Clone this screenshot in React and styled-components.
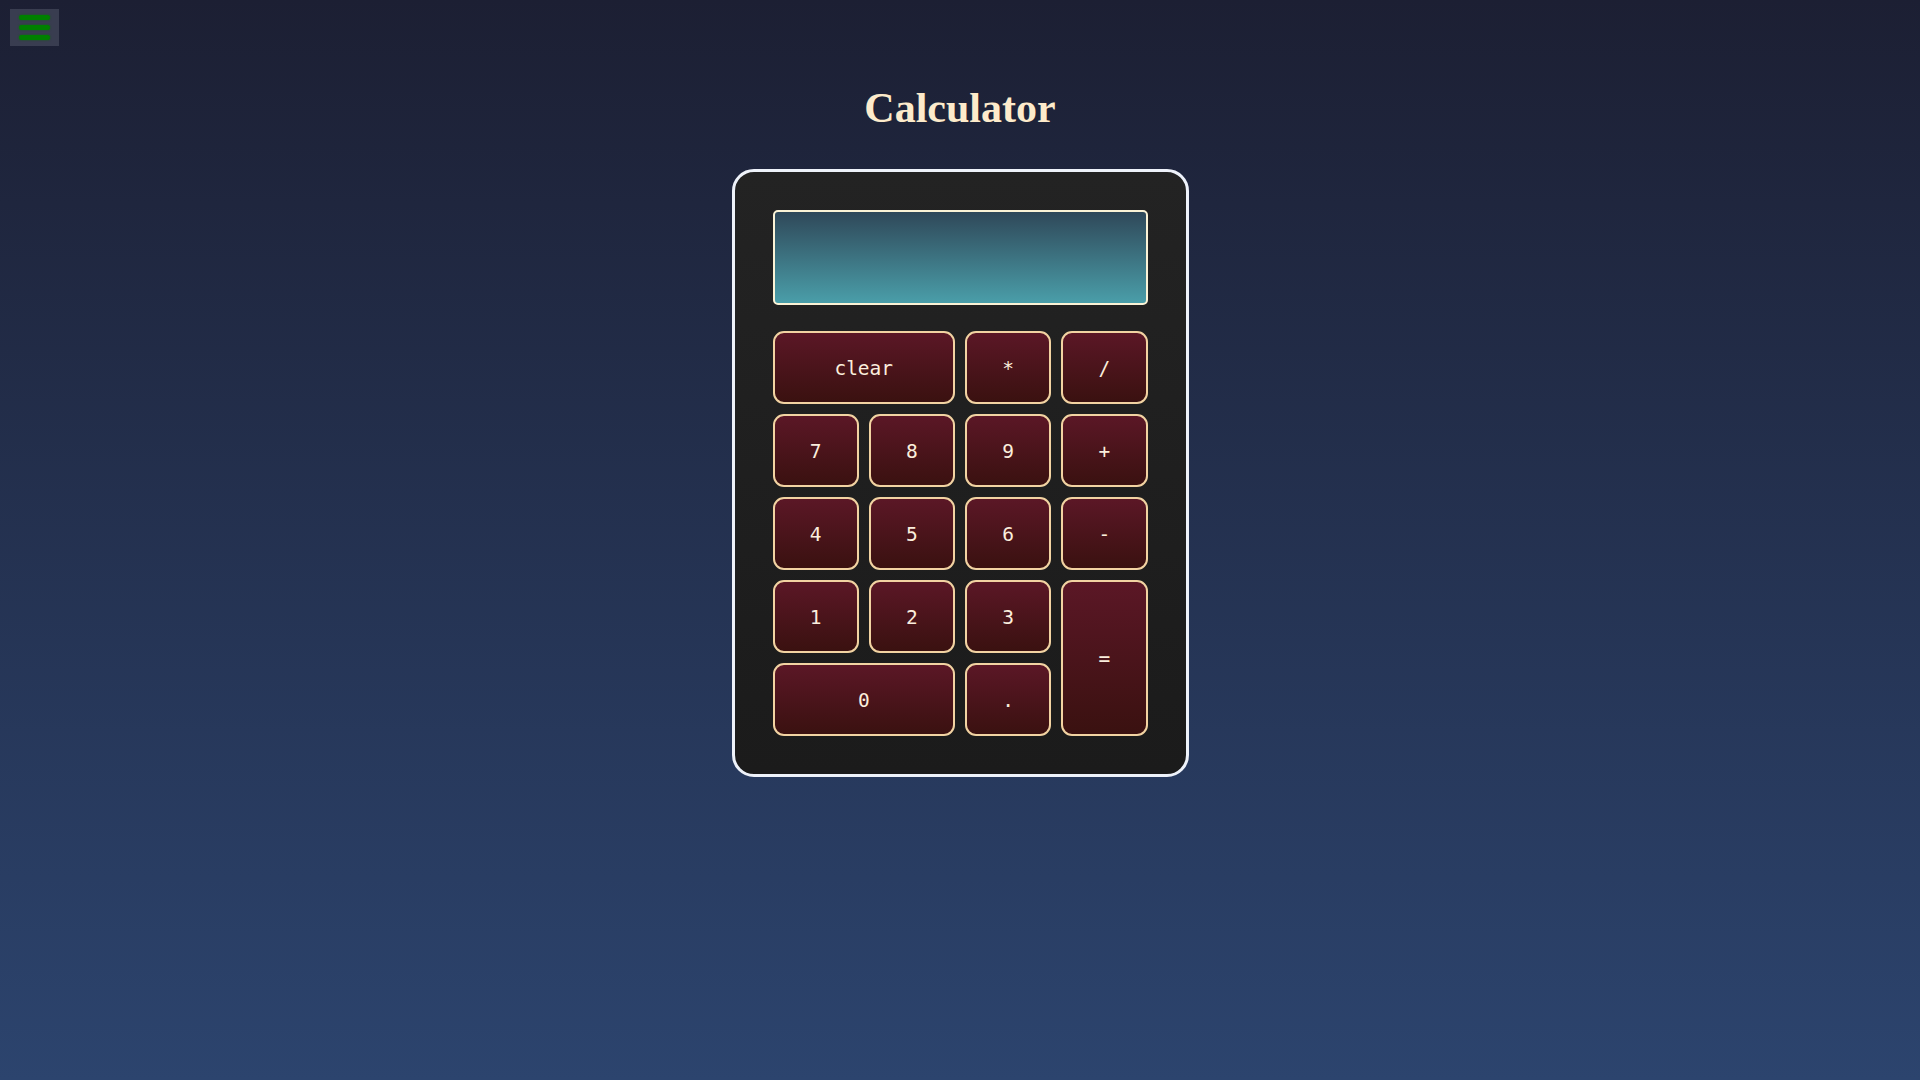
import React from "react";
import styled, { createGlobalStyle } from "styled-components";

const Global = createGlobalStyle`
  html, body { margin: 0; padding: 0; }
  body {
    min-height: 100vh;
    background: linear-gradient(180deg, #1c1f33 0%, #2c446e 100%);
    font-family: "DejaVu Sans Mono", "Liberation Mono", monospace;
  }
  #root { min-height: 100vh; }
`;

const Page = styled.div`
  min-height: 100vh;
  display: flex;
  flex-direction: column;
  align-items: center;
`;

const TopBar = styled.div`
  align-self: stretch;
  padding: 9px 10px 0;
  display: flex;
`;

const MenuButton = styled.button`
  width: 49px;
  height: 37px;
  padding: 0;
  border: none;
  background: rgba(70, 74, 92, 0.7);
  display: flex;
  flex-direction: column;
  align-items: center;
  justify-content: center;
  gap: 5px;
  cursor: pointer;
`;

const MenuLine = styled.span`
  display: block;
  width: 31px;
  height: 5px;
  border-radius: 3px;
  background: #008000;
  box-shadow: 0 0 2px #0a6a0a;
`;

const Title = styled.h1`
  margin: 38px 0 0;
  font-family: "Liberation Serif", "DejaVu Serif", serif;
  font-weight: 700;
  font-size: 42px;
  line-height: normal;
  color: #fdebcb;
  letter-spacing: 0;
`;

const Calculator = styled.div`
  margin-top: 37px;
  width: 375px;
  padding: 38px;
  border: 3px solid #eef2fa;
  border-radius: 22px;
  background: linear-gradient(180deg, #232323 0%, #1b1b1b 100%);
`;

const Display = styled.div`
  box-sizing: border-box;
  height: 95px;
  border: 2px solid #fbf3d6;
  border-radius: 5px;
  background: linear-gradient(180deg, #2f4859 0%, #4a9ea9 100%);
  margin-bottom: 26px;
`;

const Keys = styled.div`
  display: grid;
  grid-template-columns: repeat(4, 1fr);
  grid-auto-rows: 72.5px;
  column-gap: 10px;
  row-gap: 10.5px;
`;

const Key = styled.button`
  box-sizing: border-box;
  grid-column: span ${(p) => p.$cols || 1};
  grid-row: span ${(p) => p.$rows || 1};
  border: 2px solid #f2d3a2;
  border-radius: 11px;
  background: linear-gradient(180deg, #5b1726 0%, #3a1110 100%);
  color: #fbeedd;
  font-family: "DejaVu Sans Mono", "Liberation Mono", monospace;
  font-size: 19.5px;
  padding: 2px 0 0;
  cursor: pointer;
`;

const keys = [
  { l: "clear", c: 2 },
  { l: "*" },
  { l: "/" },
  { l: "7" },
  { l: "8" },
  { l: "9" },
  { l: "+" },
  { l: "4" },
  { l: "5" },
  { l: "6" },
  { l: "-" },
  { l: "1" },
  { l: "2" },
  { l: "3" },
  { l: "=", r: 2 },
  { l: "0", c: 2 },
  { l: "." },
];

export default function App() {
  return (
    <>
      <Global />
      <Page>
        <TopBar>
          <MenuButton aria-label="menu">
            <MenuLine />
            <MenuLine />
            <MenuLine />
          </MenuButton>
        </TopBar>
        <Title>Calculator</Title>
        <Calculator>
          <Display />
          <Keys>
            {keys.map((k) => (
              <Key key={k.l} $cols={k.c} $rows={k.r}>
                {k.l}
              </Key>
            ))}
          </Keys>
        </Calculator>
      </Page>
    </>
  );
}
